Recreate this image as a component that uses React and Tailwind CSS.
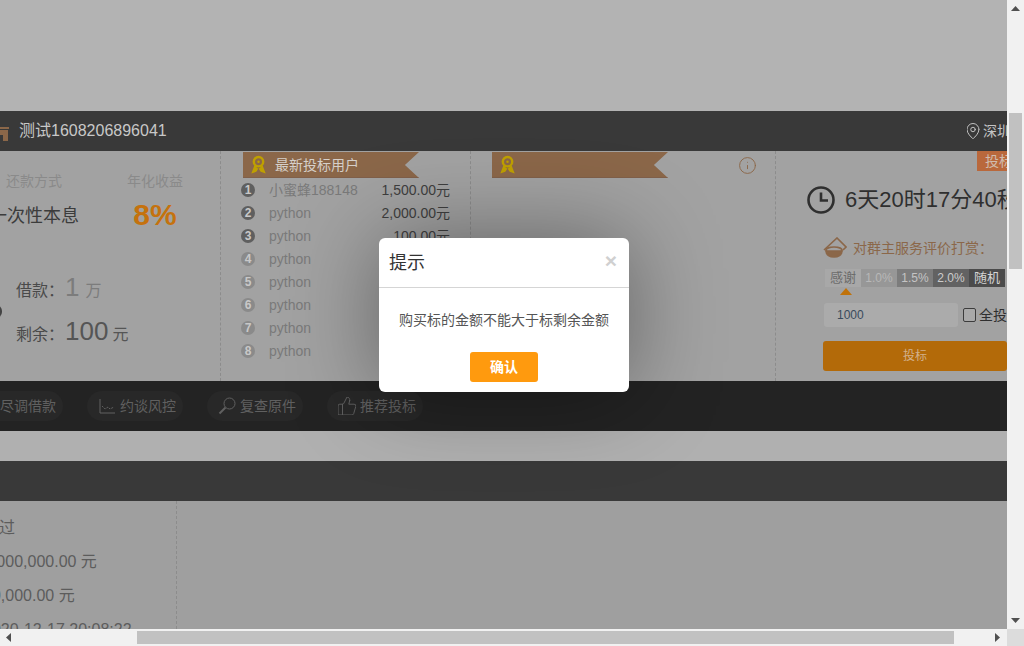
import React from "react";
import { ThumbsUp, MapPin, Info } from "lucide-react";

const FONT = { fontFamily: '"Liberation Sans","Noto Sans CJK SC",sans-serif' };

function Rosette({ className }) {
  return (
    <svg viewBox="0 0 16 20" className={className} fill="none">
      <circle cx="8" cy="7" r="5" stroke="#bfa000" strokeWidth="2.6" />
      <circle cx="8" cy="7" r="1.3" fill="#bfa000" />
      <path d="M4.5 11.5 L2 18 L5 17 L7 14 M11.5 11.5 L14 18 L11 17 L9 14" stroke="#bfa000" strokeWidth="2" fill="#bfa000" />
    </svg>
  );
}

function Ribbon({ children }) {
  return (
    <div className="flex h-[26px] w-[176px] items-center border-b border-[#80604a] bg-[#8b6749] pl-2 [clip-path:polygon(0_0,100%_0,92%_50%,100%_100%,0_100%)]">
      <Rosette className="h-[19px] w-[15px]" />
      {children}
    </div>
  );
}

const bidders = [
  ["小蜜蜂188148", "1,500.00元"],
  ["python", "2,000.00元"],
  ["python", "100.00元"],
  ["python", ""],
  ["python", ""],
  ["python", ""],
  ["python", ""],
  ["python", ""],
];

function Pill({ icon, label, className = "" }) {
  return (
    <div className={`flex h-[30px] w-[96px] shrink-0 items-center gap-1 rounded-full bg-[#282828] pl-[11px] text-sm text-[#606060] ${className}`}>
      <span className="flex h-[18px] w-[18px] shrink-0 items-center justify-center">{icon}</span>
      <span className="whitespace-nowrap">{label}</span>
    </div>
  );
}

function Rate({ label, className }) {
  return <div className={`flex h-[18px] w-9 items-center justify-center ${className}`}>{label}</div>;
}

function VArrow({ up }) {
  return (
    <svg viewBox="0 0 9 5" className="h-[5px] w-[9px]">
      <path d={up ? "M4.5 0 L9 5 H0 Z" : "M0 0 H9 L4.5 5 Z"} fill="#505050" />
    </svg>
  );
}

export default function App() {
  return (
    <div style={FONT} className="relative flex h-screen w-full flex-col overflow-hidden bg-[#b3b3b3]">
      <div className="flex min-h-0 flex-1">
        {/* page */}
        <main className="flex min-w-0 flex-1 flex-col overflow-hidden">
          <div className="h-[111px] shrink-0 bg-[#b3b3b3]" />
          {/* title bar */}
          <div className="flex h-10 shrink-0 items-center justify-between bg-[#393939]">
            <div className="flex items-center">
              <svg viewBox="0 0 16 16" className="ml-[-7px] mt-1 h-4 w-4">
                <path d="M0 2 H16 V4 H0 Z M1 5 H15 V16 H10 V10 H6 V16 H1 Z" fill="#8b6749" />
              </svg>
              <span className="ml-[10px] text-base text-[#c8c8c8]">测试1608206896041</span>
            </div>
            <div className="flex w-10 items-center overflow-hidden whitespace-nowrap text-sm text-[#c4c4c4]">
              <MapPin className="ml-[-3px] h-[18px] w-[18px] shrink-0" strokeWidth={1.3} />
              <span className="ml-[1px]">深圳市</span>
            </div>
          </div>
          {/* detail */}
          <div className="flex h-[230px] shrink-0 bg-[#a2a2a2]">
            <section className="relative ml-[-30px] flex w-[251px] shrink-0 flex-col border-r border-dashed border-[#8c8c8c]">
              <div className="absolute left-[20px] top-[154px] h-[13px] w-3 rounded-full border-r-2 border-[#444]" />
              <div className="mt-[22px] flex">
                <div className="flex w-[128px] flex-col items-center whitespace-nowrap">
                  <span className="text-sm leading-4 text-[#8a8a8a]">还款方式</span>
                  <span className="mt-[13px] text-lg leading-7 text-[#3c3c3c]">一次性本息</span>
                </div>
                <div className="flex w-[114px] flex-col items-center whitespace-nowrap">
                  <span className="text-sm leading-4 text-[#8a8a8a]">年化收益</span>
                  <span className="mt-[11px] text-[30px] font-bold leading-[30px] text-[#c5720e]">8%</span>
                </div>
              </div>
              <div className="ml-[46px] mt-[42px] flex items-baseline text-base text-[#4a4a4a]">
                <span>借款：</span>
                <span className="ml-[1px] text-[26px] leading-[30px] text-[#7c7c7c]">1</span>
                <span className="ml-[6px] text-[#7c7c7c]">万</span>
              </div>
              <div className="ml-[46px] mt-[13px] flex items-baseline text-base text-[#4a4a4a]">
                <span>剩余：</span>
                <span className="ml-[1px] text-[26px] leading-[30px] text-[#555]">100</span>
                <span className="ml-[4px] text-[#555]">元</span>
              </div>
            </section>
            <section className="flex w-[250px] shrink-0 flex-col border-r border-dashed border-[#8c8c8c] pt-px">
              <div className="ml-[22px]">
                <Ribbon><span className="ml-[9px] text-sm text-[#d6d0ca]">最新投标用户</span></Ribbon>
              </div>
              <ul className="flex flex-col pl-5 pr-5">
                {bidders.map(([name, amount], i) => (
                  <li key={i} className="flex h-[23px] items-center text-sm">
                    <span className={`flex h-[14px] w-[14px] shrink-0 items-center justify-center rounded-full text-xs font-bold text-[#c8c8c8] ${i < 3 ? "bg-[#5f5f5f]" : "bg-[#8a8a8a]"}`}>{i + 1}</span>
                    <span className="ml-[14px] text-[#7a7a7a]">{name}</span>
                    <span className="ml-auto text-[#3f3f3f]">{amount}</span>
                  </li>
                ))}
              </ul>
            </section>
            <section className="flex w-[305px] shrink-0 items-start justify-between border-r border-dashed border-[#8c8c8c] pl-[21px] pr-[18px] pt-px">
              <Ribbon />
              <Info className="mt-1 h-[19px] w-[19px] text-[#8b6749]" strokeWidth={1.2} />
            </section>
            <section className="relative flex w-[231px] shrink-0 flex-col overflow-hidden pl-[47px]">
              <div className="absolute left-[201px] top-0 flex h-5 w-[60px] items-center whitespace-nowrap bg-[#b9683c] pl-2 text-sm text-[#d0bcae]">投标人数</div>
              <div className="ml-[-16px] mt-[35px] flex items-center whitespace-nowrap">
                <svg viewBox="0 0 28 28" className="h-7 w-7 shrink-0" fill="none" stroke="#2f2f2f" strokeWidth="2.6">
                  <circle cx="14" cy="14" r="12.5" />
                  <path d="M14 6.5 V14.5 H21" />
                </svg>
                <span className="ml-[10px] text-[22px] leading-7 text-[#2f2f2f]">6天20时17分40秒</span>
              </div>
              <div className="mt-[23px] flex items-center whitespace-nowrap">
                <svg viewBox="0 0 24 22" className="h-[22px] w-6 shrink-0" fill="none" stroke="#8b6749" strokeWidth="1.6">
                  <path d="M1 13 L14 1 L23 10 L20 13" />
                  <ellipse cx="11" cy="13" rx="8" ry="3" fill="#a2a2a2" />
                  <path d="M3 14 C3 22 19 22 19 14 Z" fill="#8b6749" />
                </svg>
                <span className="ml-[6px] text-sm text-[#8b6749]">对群主服务评价打赏：</span>
              </div>
              <div className="mt-[10px] flex pl-[2px]">
                <Rate label="感谢" className="bg-[#a8a8a8] text-[13px] text-[#6c6c6c]" />
                <Rate label="1.0%" className="bg-[#979797] text-xs text-[#b8b8b8]" />
                <Rate label="1.5%" className="bg-[#7c7c7c] text-xs text-[#c4c4c4]" />
                <Rate label="2.0%" className="bg-[#626262] text-xs text-[#cccccc]" />
                <Rate label="随机" className="bg-[#4b4b4b] text-[13px] text-[#d4d4d4]" />
              </div>
              <div className="ml-[17px] mt-px h-0 w-0 border-x-[6px] border-b-[7px] border-x-transparent border-b-[#c0720a]" />
              <div className="mt-2 flex items-center whitespace-nowrap">
                <div className="ml-px flex h-6 w-[134px] shrink-0 items-center rounded-[3px] bg-[#ababab] pl-[13px] text-xs text-[#394a5c]">1000</div>
                <span className="ml-[5px] h-[14px] w-[13px] shrink-0 rounded-[2px] border border-[#3c3c3c] bg-[#a9a9a9]" />
                <span className="ml-[3px] text-sm text-[#2f2f2f]">全投</span>
              </div>
              <button className="mt-[14px] flex h-[30px] w-[184px] shrink-0 items-center justify-center rounded-[3px] bg-[#b36a09] text-xs text-[#d2b18c]">投标</button>
            </section>
          </div>
          {/* action bar */}
          <div className="flex h-[50px] shrink-0 items-center gap-6 bg-[#232323]">
            <Pill className="ml-[-33px]" label="尽调借款" />
            <Pill
              label="约谈风控"
              icon={
                <svg viewBox="0 0 16 16" className="h-4 w-4" fill="none" stroke="#606060" strokeWidth="1">
                  <path d="M1 1 V15 H16" />
                  <path d="M3 8 L6 11 L9 9 L11 11 L15 9" strokeDasharray="2 1" />
                </svg>
              }
            />
            <Pill
              label="复查原件"
              icon={
                <svg viewBox="0 0 18 18" className="h-[18px] w-[18px]" fill="none" stroke="#606060" strokeWidth="1">
                  <circle cx="11.5" cy="6.5" r="5.5" />
                  <path d="M7.5 10.5 L1.5 16.5" strokeWidth="2" />
                </svg>
              }
            />
            <Pill label="推荐投标" icon={<ThumbsUp viewBox="2 2 20 20" className="h-[18px] w-[18px]" strokeWidth={1.1} />} />
          </div>
          <div className="h-[30px] shrink-0 bg-[#b0b0b0]" />
          <div className="h-10 shrink-0 bg-[#393939]" />
          {/* info panel */}
          <div className="flex min-h-0 flex-1 bg-[#9f9f9f]">
            <div className="ml-[-17px] flex w-[194px] shrink-0 flex-col whitespace-nowrap border-r border-dashed border-[#8c8c8c] pt-[10px] text-base leading-[34px] text-[#5c5c5c]">
              <div>通过</div>
              <div>1,000,000.00 元</div>
              <div>10,000.00 元</div>
              <div>2020-12-17 20:08:22</div>
            </div>
          </div>
        </main>
        {/* vertical scrollbar */}
        <div className="flex w-[17px] shrink-0 flex-col items-center bg-[#f1f1f1]">
          <div className="flex h-[17px] w-full shrink-0 items-center justify-center"><VArrow up /></div>
          <div className="mt-[96px] h-[156px] w-[13px] bg-[#c1c1c1]" />
          <div className="mt-auto flex h-[17px] w-full shrink-0 items-center justify-center"><VArrow /></div>
        </div>
      </div>
      {/* horizontal scrollbar */}
      <div className="flex h-[17px] shrink-0 bg-[#f1f1f1]">
        <div className="flex w-[17px] shrink-0 items-center justify-center">
          <svg viewBox="0 0 5 9" className="h-[9px] w-[5px]"><path d="M5 0 V9 L0 4.5 Z" fill="#505050" /></svg>
        </div>
        <div className="ml-[120px] mt-[2px] h-[13px] w-[817px] bg-[#c1c1c1]" />
        <div className="ml-auto flex w-[36px] shrink-0">
          <div className="flex w-[19px] items-center justify-center">
            <svg viewBox="0 0 5 9" className="h-[9px] w-[5px]"><path d="M0 0 V9 L5 4.5 Z" fill="#505050" /></svg>
          </div>
          <div className="w-[17px] bg-[#dcdcdc]" />
        </div>
      </div>
      {/* modal */}
      <div className="absolute left-[379px] top-[238px] flex h-[154px] w-[250px] flex-col rounded-md bg-white shadow-[0_0_90px_rgba(0,0,0,0.4)]">
        <div className="flex h-[50px] items-center justify-between border-b border-[#d5d5d5] pl-[10px] pr-3">
          <span className="text-lg text-[#333]">提示</span>
          <span className="mb-1 text-[21px] font-bold leading-none text-[#d0d0d0]">×</span>
        </div>
        <p className="mt-[22px] text-center text-sm leading-5 text-[#555]">购买标的金额不能大于标剩余金额</p>
        <button className="mx-auto mt-[22px] flex h-[30px] w-[68px] items-center justify-center rounded-[3px] bg-[#ff9a0e] text-sm font-bold text-white">确认</button>
      </div>
    </div>
  );
}
